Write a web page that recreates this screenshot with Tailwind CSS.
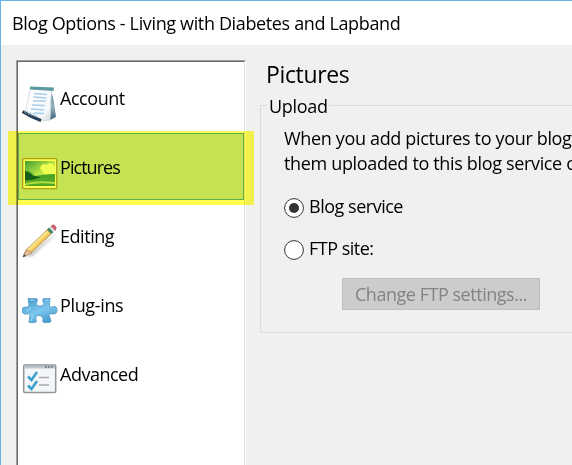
<!DOCTYPE html>
<html lang="en"><head><meta charset="utf-8"><title>Blog Options</title>
<script src="https://cdn.jsdelivr.net/npm/@tailwindcss/browser@4"></script></head>
<body class="w-[572px] h-[465px] overflow-hidden bg-[#f0f0f0] text-black text-[18px] leading-[25px] font-['Open_Sans','Noto_Sans',sans-serif] whitespace-nowrap">
<div class="relative flex flex-col w-full h-full overflow-hidden border-t border-l border-[#65b5ea]">
  <header class="h-[44px] shrink-0 bg-white pl-[11px] pt-[10px] tracking-[-0.36px]">Blog Options - Living with Diabetes and Lapband</header>
  <main class="flex flex-1 pl-[15px] pt-[15px] min-h-0">
    <nav class="w-[230px] h-[420px] shrink-0 border-t border-l border-[#a0a0a0] border-r border-r-white">
      <div class="h-full border-t border-l border-[#696969] border-r border-r-[#e3e3e3] bg-white pt-[2px]">
        <div class="h-[69px] pl-1 pt-[22px] flex gap-[2px]">
          <svg class="w-9 h-9 shrink-0" viewBox="0 0 36 36"><defs><linearGradient id="paper" x2="1" y2="1"><stop stop-color="#fff"/><stop offset=".75" stop-color="#f5f8fa"/><stop offset="1" stop-color="#c7d0d7"/></linearGradient><linearGradient id="side" y2="1" x2="0"><stop stop-color="#4f93a3"/><stop offset=".6" stop-color="#94b1bb"/><stop offset="1" stop-color="#3c6377"/></linearGradient></defs><path d="M29 3l3 13 2 15-6 3z" fill="url(#side)"/><path d="M8.500 2L30 3l-1 8-1 23-9 1-16-8z" fill="url(#paper)" stroke="#ccd5db" stroke-width=".8"/><path d="M8 .5l24 1-.5 3.500L8 3.500z" fill="#5b9a9f"/><path d="M12 7.500l13 1M11.500 11l13 1M11 15h13M10 19l13 .5M9 23l13 1M12 27l10 .5" stroke="#a7cde8" stroke-width="1.500" fill="none"/><path d="M.5 25.500Q9 31 19 34.500" stroke="#263f57" stroke-width="3.200" fill="none"/><path d="M2 24l2 4m1-3l2 4m1-3l2 4m1-3l2 4m1-2l2 3" stroke="#88a6bd" stroke-width=".8"/></svg>
          <span class="tracking-[-0.45px]">Account</span></div>
        <div class="h-[69px]"><div class="h-[67px] border border-[#62b0f0] bg-[#c4e2ff] pl-[3px] pt-[21px] flex gap-[2px]">
          <svg class="w-9 h-9 shrink-0" viewBox="0 0 36 36"><defs><linearGradient id="sky" x2=".8" y2="1"><stop stop-color="#3d9f9e"/><stop offset=".5" stop-color="#b4e3c8"/><stop offset="1" stop-color="#e8ffff"/></linearGradient><filter id="soft"><feGaussianBlur stdDeviation=".7"/></filter><clipPath id="photo"><path d="M3 6h30v25H3z"/></clipPath></defs><rect x=".7" y="3.700" width="34" height="30" rx="1" fill="#fffff5" stroke="#aaa13b" stroke-width="1.300"/><g clip-path="url(#photo)"><path d="M3 6h30v25H3z" fill="url(#sky)"/><g filter="url(#soft)"><path d="M18 13q3-6 6-3 6-5 9 3v6l-10 1z" fill="#efffff"/><path d="M2 15q6 0 11 6 9-2 20-2v6H2z" fill="#4ca36f"/><path d="M2 16q6 1 9 5l8 1-8 3-9 1z" fill="#155f45"/><path d="M2 26q10-1 15-3 9-2 17-1v9H2z" fill="#4fa678"/><path d="M2 29q10-4 31-2v2q-20-2-31 2z" fill="#b3deb5"/></g></g></svg>
          <span class="tracking-[-0.95px]">Pictures</span></div></div>
        <div class="h-[69px] pl-1 pt-[22px] flex gap-[2px]">
          <svg class="w-9 h-9 shrink-0" viewBox="0 0 36 36"><defs><linearGradient id="wood" x1=".35" y1=".35" x2=".65" y2=".65"><stop stop-color="#e5b95b"/><stop offset=".35" stop-color="#ffe78d"/><stop offset=".65" stop-color="#f2c355"/><stop offset="1" stop-color="#bc8039"/></linearGradient><filter id="shade"><feGaussianBlur stdDeviation="1"/></filter></defs><path d="M2 34L34 9l-4 5L11 32z" fill="#ccc" filter="url(#shade)"/><path d="M1 33l3-7L25 6l4 4-19 18z" fill="url(#wood)" stroke="#a98144" stroke-width=".7"/><path d="M1 33l3-7q4 0 6 3z" fill="#e8ba95" stroke="#a78360" stroke-width=".6"/><path d="M1 33l1-3 2 2z" fill="#444"/><path d="M25 5.500l2-2 4.500 4.500-2 2z" fill="#3f805b"/><path d="M27 3.500l2-1 4 4-1.500 2z" fill="#d5dadd"/><path d="M28.500 2q3-3 5 0 2 2 0 5z" fill="#c7606e"/></svg>
          <span class="tracking-[-0.45px]">Editing</span></div>
        <div class="h-[69px] pl-1 pt-[22px] flex gap-[2px]">
          <svg class="w-9 h-9 shrink-0" viewBox="0 0 36 36"><defs><linearGradient id="blue" x2=".6" y2="1"><stop stop-color="#3f93c7"/><stop offset=".6" stop-color="#7bc6ed"/><stop offset="1" stop-color="#4a9fd5"/></linearGradient></defs><path d="M6 5.500h8.500q1.500 0 .5 3-2 4.500 3 4.500t3-4.500q-1-3 1-3h6l-.5 7.500q0 2 2 1 5-2 5.500 2.500t-4 4.500q-4-1-4 1l2 5.500q0 2-2 2h-5q-2 0-1-3 0-4-4-4t-3 4q1 3-1 3H7l1-7.500q0-2-3-1-4 1-5-3t4-4q3 1 3-2z" fill="url(#blue)" stroke="#5398c3" stroke-width=".8"/><path d="M8 7h5M23 7h4M8 14q0 4-4 3M10 21q1 4-1 7" fill="none" stroke="#a7dcf5" stroke-width="1"/></svg>
          <span class="tracking-[-0.35px]">Plug-ins</span></div>
        <div class="h-[69px] pl-1 pt-[22px] flex gap-[2px]">
          <svg class="w-9 h-9 shrink-0" viewBox="0 0 36 36"><rect x="1.700" y="3" width="32" height="27.500" rx="1" fill="#f4f6f7" stroke="#90969b" stroke-width="1.500"/><path d="M3 4h30v2.500H3z" fill="#bcc7d0"/><path d="M23 5h2m1 0h2m1 0h2" stroke="#6e7985" stroke-width="1.500"/><path d="M17 15.500h10M17 23h10" stroke="#a9a9b5" stroke-width="1.300"/><path d="M6 14.500l3.500 3.500 5.500-8M6 23.500l3.500 3.500 5.500-8" fill="none" stroke="#3b9fd0" stroke-width="2.500"/></svg>
          <span class="tracking-[-0.5px]">Advanced</span></div>
      </div>
    </nav>
    <section class="pl-[14px] min-w-0 flex-1">
      <h1 class="pl-[6px] h-[34px] text-[23px] leading-[28px] tracking-[-0.35px]">Pictures</h1>
      <div class="mt-[11px] w-[340px] h-[228px] border border-[#dcdcdc]">
        <div class="w-[62px] h-[25px] ml-[6px] mt-[-12px] bg-[#f0f0f0] pl-[2px] tracking-[-0.3px]">Upload</div>
        <div class="pl-[23px] pt-[7px] tracking-[-0.34px]">When you add pictures to your blog<br>them uploaded to this blog service o</div>
        <div class="flex items-center gap-[5px] pl-[23px] mt-[19px] h-[25px]"><svg class="w-5 h-5 mt-px" viewBox="0 0 20 20"><circle cx="10" cy="10" r="9.400" fill="#fff" stroke="#333" stroke-width="1"/><circle cx="10" cy="10" r="5" fill="#333"/></svg><span class="tracking-[-0.48px] -mt-0.5">Blog service</span></div>
        <div class="flex items-center gap-[5px] pl-[23px] mt-[17px] h-[25px]"><svg class="w-5 h-5 mt-px" viewBox="0 0 20 20"><circle cx="10" cy="10" r="9.400" fill="#fff" stroke="#333" stroke-width="1"/></svg><span class="tracking-[-0.5px] -mt-0.5">FTP site:</span></div>
        <button disabled class="block w-[198px] h-[32px] ml-[81px] mt-[16px] bg-[#ccc] border border-[#bfbfbf] text-[#838383] tracking-[-0.47px]">Change FTP settings...</button>
      </div>
    </section>
  </main>
  <div class="absolute left-[7px] top-[130px] w-[246px] h-[74px] bg-[#ffff52] mix-blend-multiply"></div>
</div>
</body></html>
